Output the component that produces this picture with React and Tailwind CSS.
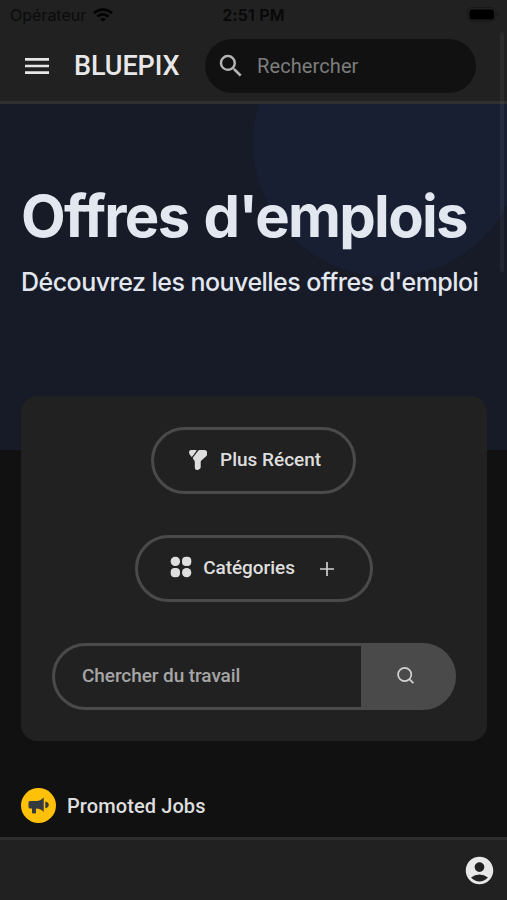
import { MdMenu, MdSearch, MdAccountCircle } from "react-icons/md";

function WifiIcon() {
  return (
    <svg className="ml-[7px] h-[14px] w-5" viewBox="0 0 20 14" fill="none" stroke="#030303" strokeWidth="2.7">
      <path d="M1 5.2C6 .3 14 .3 19 5.2" />
      <path d="M4.4 8.6C7.6 5.6 12.4 5.6 15.6 8.6" />
      <path d="M7 11.1C8.8 9.6 11.2 9.6 13 11.1L10 13.8Z" fill="#030303" stroke="none" />
    </svg>
  );
}

function StatusBar() {
  return (
    <div className="grid h-[30px] grid-cols-3 items-center pl-[10px] pr-[7px] text-[#080808]">
      <div className="flex items-center font-['Inter',sans-serif] text-[16px] tracking-[0px] text-[#0b0b0b]">
        Opérateur
        <WifiIcon />
      </div>
      <div className="-ml-[3px] text-center font-['Inter',sans-serif] text-[16px] font-semibold tracking-[0.2px]">2:51 PM</div>
      <svg className="-mt-[2px] h-[15px] w-[33px] justify-self-end" viewBox="0 0 33 15">
        <rect x="0.5" y="0.5" width="28.5" height="13.5" rx="4" fill="none" stroke="#191919" />
        <rect x="2.5" y="2.5" width="24.5" height="10" rx="2.5" fill="#000" />
        <path d="M30.5 5v5q2-2.5 0-5" fill="#151515" />
      </svg>
    </div>
  );
}

function Header() {
  return (
    <header className="h-[104px] shrink-0 border-b-[3px] border-[#303030] bg-[#212121]">
      <StatusBar />
      <div className="flex h-[71px] items-center pl-[21px]">
        <MdMenu className="size-8 text-[#e6e6e6]" />
        <span className="ml-[21px] w-[131px] whitespace-nowrap pt-[2px] text-[27px] font-medium tracking-[-0.1px] text-[#e8e8e8]">BLUEPIX</span>
        <div className="flex h-[54px] w-[271px] items-center rounded-full bg-[#111111] pl-[11px]">
          <MdSearch className="size-[30px] text-[#b5b5b5]" />
          <span className="ml-[11px] text-[20px] tracking-[0.1px] text-[#7d7d7d]">Rechercher</span>
        </div>
      </div>
    </header>
  );
}

function Hero() {
  return (
    <section className="relative h-[346px] shrink-0 overflow-hidden bg-[#171b27] pl-[21px] font-['Inter',sans-serif] text-[#e3e7ef]">
      <div className="absolute -top-[97px] left-[253px] size-[270px] rounded-full bg-[#191f32]" />
      <h1 className="relative mt-[75px] whitespace-nowrap text-[58px] font-bold leading-[75px] tracking-[-1.7px] [word-spacing:3px]">Offres d'emplois</h1>
      <p className="relative mt-[11px] whitespace-nowrap text-[25px] font-medium leading-[34px] tracking-[-0.53px]">
        Découvrez les nouvelles offres d'emploi
      </p>
    </section>
  );
}

function FilterIcon() {
  return (
    <svg className="-mt-[2px] h-[22px] w-5" viewBox="0 0 20 22" fill="#dedede">
      <path d="M3.2 1H8Q9 1 8.4 1.9L4.3 7.5Q3.7 8.2 3.1 7.5Q1 5.5 1 3.2Q1 1 3.2 1Z" />
      <path d="M11.4 1H16.5Q19 1 19 3.5V5.4Q19 6.4 18.2 7.2L13.4 11.5Q12.7 12.1 12.7 13V18.3Q12.7 19.4 11.7 20L9.8 20.9Q7 21.5 6.8 18.7V13.1Q6.8 12 6.2 11.2L5 9.8Q4.6 9.2 5 8.6L10.2 1.7Q10.7 1 11.4 1Z" />
    </svg>
  );
}

function GridIcon() {
  return (
    <svg className="-mt-[3px] size-[22px]" viewBox="0 0 22 22" fill="#dedede">
      <rect x=".7" y=".7" width="9.3" height="9.3" rx="4.4" />
      <rect x="12" y=".7" width="9.3" height="9.3" rx="4" />
      <rect x=".7" y="12" width="9.3" height="9.3" rx="4" />
      <rect x="12" y="12" width="9.3" height="9.3" rx="4.6" />
    </svg>
  );
}

function Filters() {
  return (
    <section className="relative mx-[21px] -mt-[54px] flex h-[345px] w-[466px] shrink-0 flex-col items-center gap-[41px] rounded-[16px] bg-[#212121] pt-[31px] text-[19px] font-medium text-[#dedede]">
      <button className="mr-px flex h-[67px] w-[205px] items-center rounded-full border-[3px] border-[#4a4a4a] pl-[34px]">
        <FilterIcon />
        <span className="ml-[12px] whitespace-nowrap">Plus Récent</span>
      </button>
      <button className="flex h-[67px] w-[238px] items-center rounded-full border-[3px] border-[#4a4a4a] pl-[32px]">
        <GridIcon />
        <span className="ml-[11px] w-[92px] whitespace-nowrap tracking-[-0.05px]">Catégories</span>
        <svg className="ml-[25px] size-[14px]" viewBox="0 0 14 14" stroke="#cfcfcf" strokeWidth="1.7">
          <path d="M7 0V14M0 7H14" />
        </svg>
      </button>
      <div className="flex h-[67px] w-[404px] overflow-hidden rounded-full border-[3px] border-[#4a4a4a] bg-[#4a4a4a]">
        <div className="flex w-[306px] items-center bg-[#212121] pl-[27px] tracking-[-0.08px] text-[#a6a6a6]">Chercher du travail</div>
        <div className="flex flex-1 items-center pl-[36px]">
          <svg className="-mt-[2px] size-[17px]" viewBox="0 0 17 17" fill="none" stroke="#d2d2d2" strokeWidth="1.7">
            <circle cx="7.7" cy="7.5" r="6.6" />
            <path d="M12.3 12.1L16.4 16.2" />
          </svg>
        </div>
      </div>
    </section>
  );
}

function PromotedHeading() {
  return (
    <div className="mt-[47px] flex h-[35px] shrink-0 items-center pl-[21px]">
      <div className="flex size-[35px] items-center justify-center rounded-full bg-[#ffc107]">
        <svg className="h-[17px] w-[21px]" viewBox="0 0 21 17" fill="#343a40">
          <path d="M2 4H8.5C11.5 4 14 2.4 15.7.5V15C14 13 11.5 11.7 8 11.6V15.5Q8 16.5 7 16.5H5Q4 16.5 4 15.5V11.6H2Q.5 11.6.5 10.1V5.5Q.5 4 2 4Z" />
          <path d="M17.3 4.4Q20.8 5 20.8 7.8Q20.8 10.6 17.3 11.2Z" />
        </svg>
      </div>
      <span className="ml-[11px] text-[20px] font-medium tracking-[0.1px] text-[#dedede]">Promoted Jobs</span>
    </div>
  );
}

export default function App() {
  return (
    <div className="relative flex h-[900px] w-[507px] flex-col overflow-hidden bg-[#111111] font-['Roboto',sans-serif]">
      <Header />
      <Hero />
      <Filters />
      <PromotedHeading />
      <footer className="mt-auto flex h-[63px] shrink-0 items-center justify-end border-t-[3px] border-[#2d2d2d] bg-[#212121] pr-[11px]">
        <MdAccountCircle className="size-[33px] text-[#e8e8e8]" />
      </footer>
      <div className="absolute right-[3px] top-[32px] h-[240px] w-[4px] rounded-full bg-white/5" />
    </div>
  );
}
